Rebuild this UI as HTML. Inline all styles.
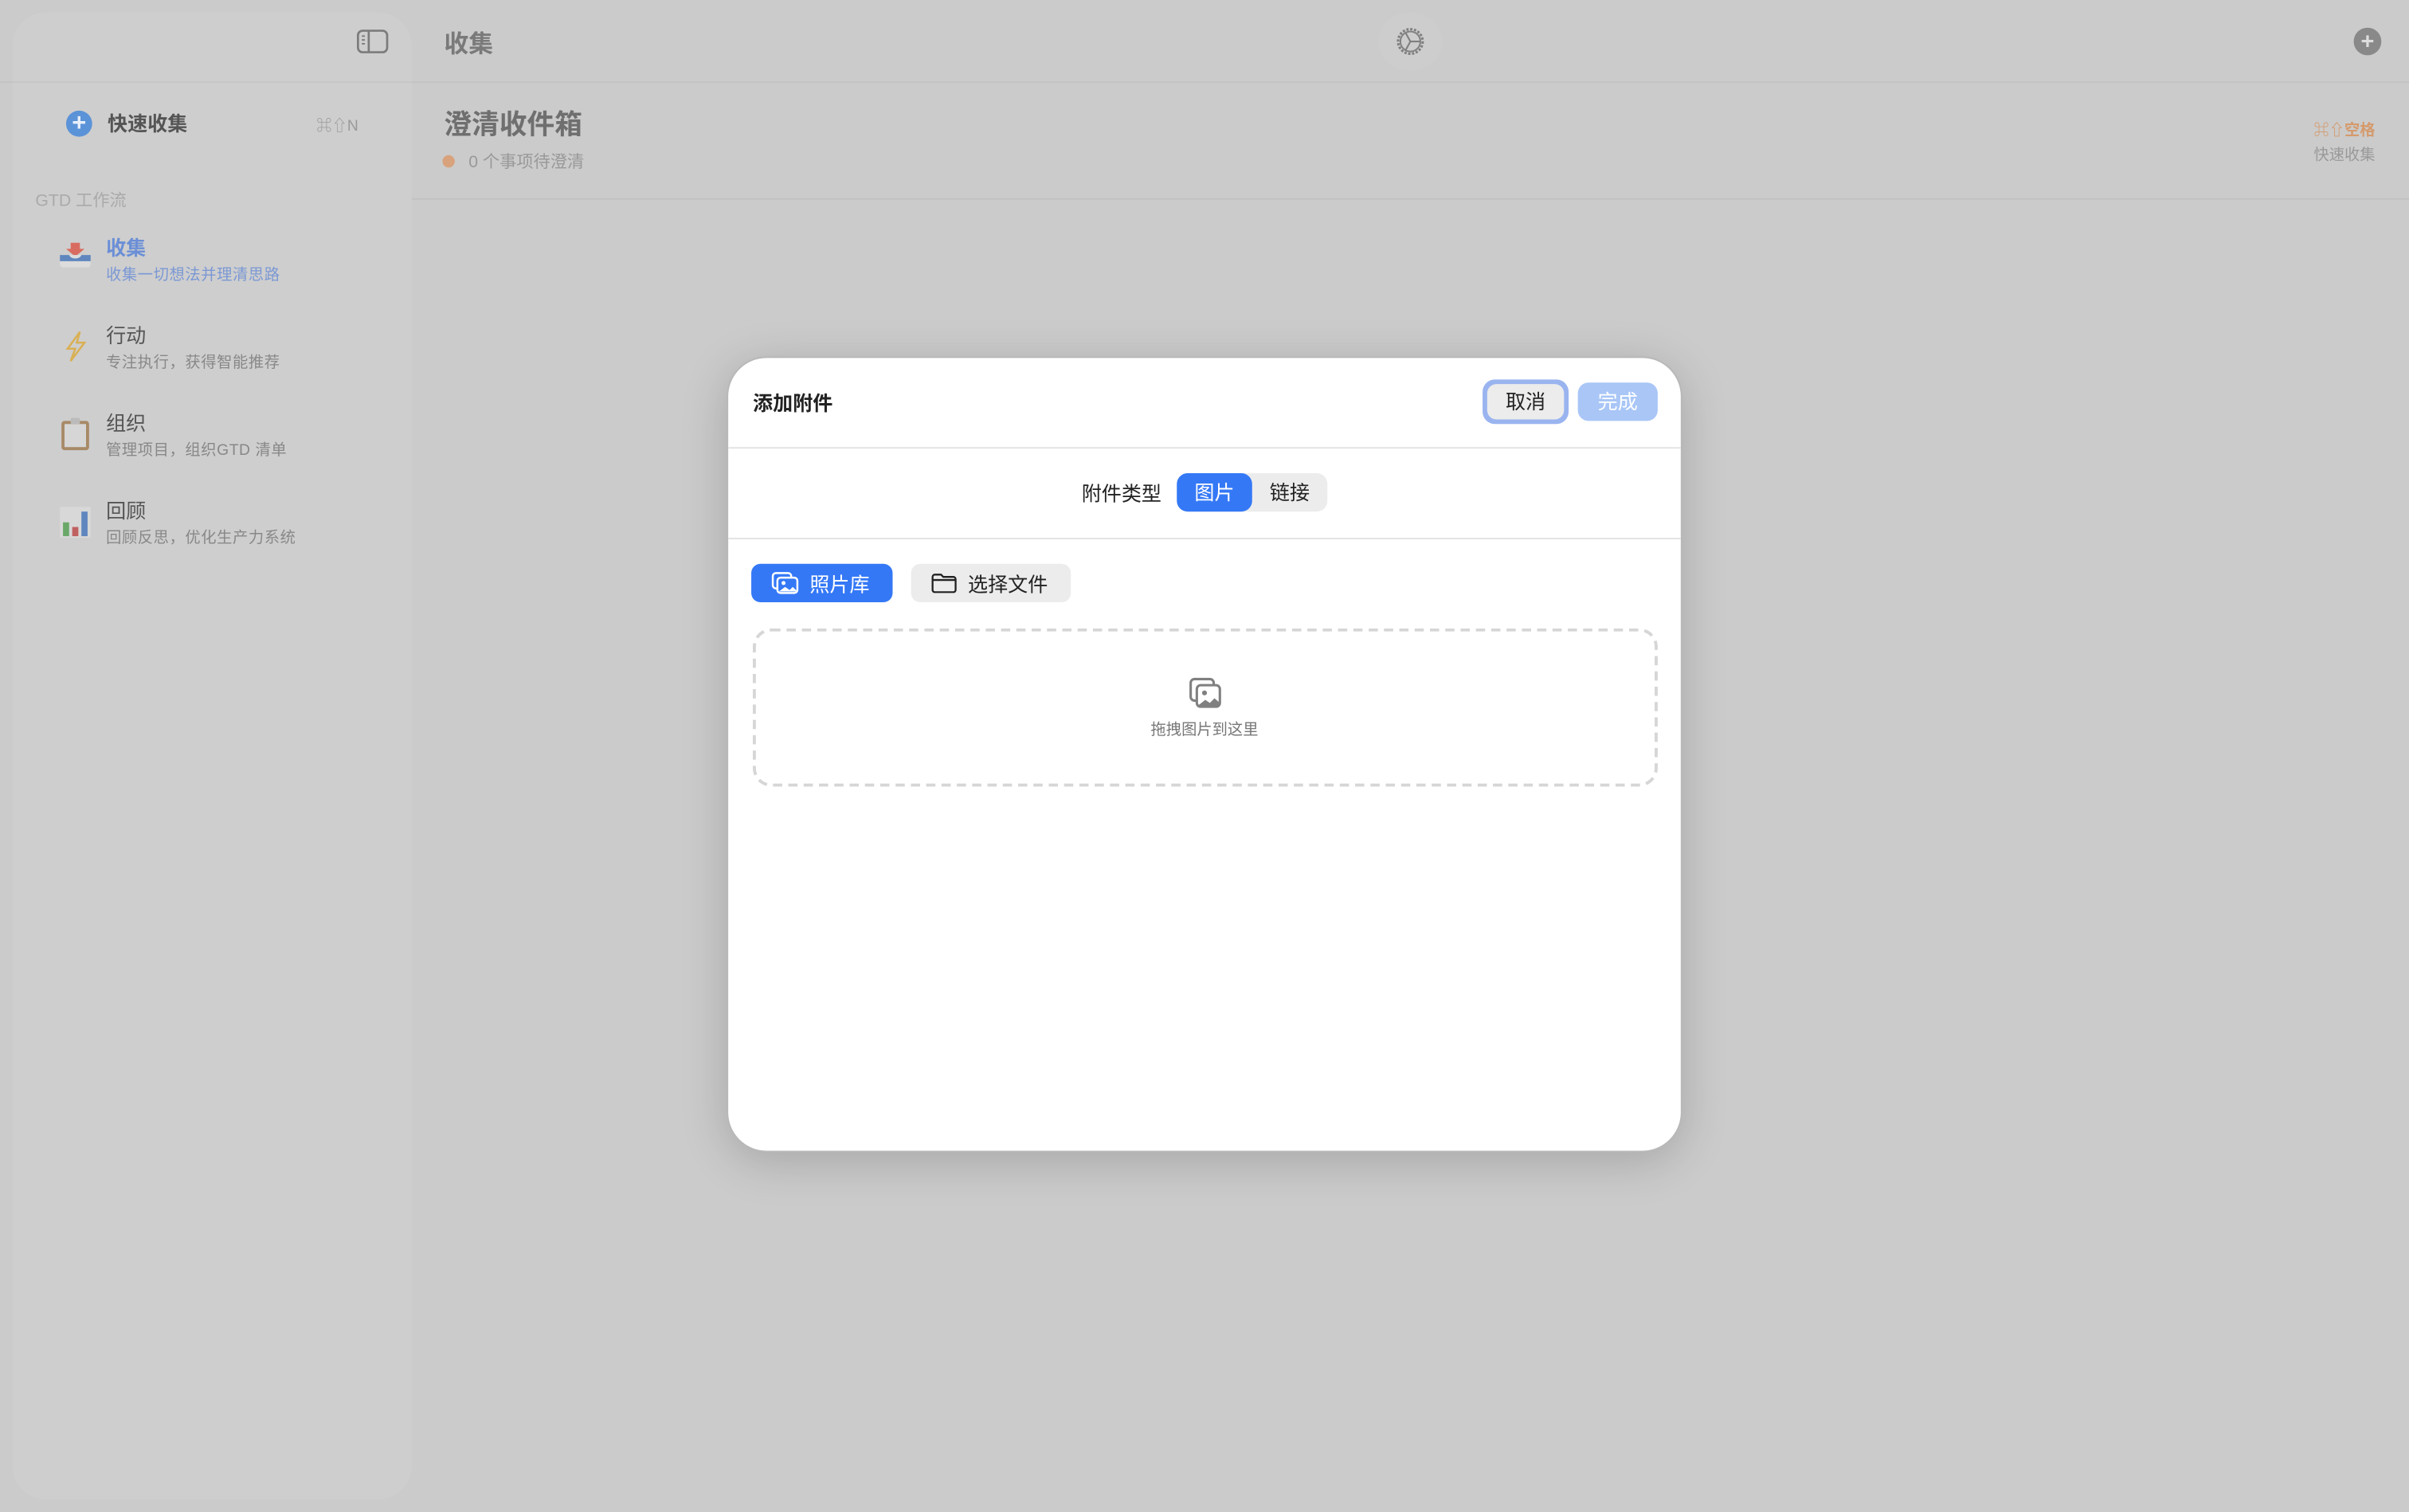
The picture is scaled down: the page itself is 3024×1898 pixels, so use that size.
<!DOCTYPE html>
<html><head><meta charset="utf-8"><style>
*{margin:0;padding:0;box-sizing:border-box}
html,body{width:3024px;height:1898px;overflow:hidden;background:#cbcbcb}
#w{position:absolute;left:0;top:0;width:1568px;height:984px;transform:scale(1.928571);transform-origin:0 0;font-family:"Liberation Sans","Noto Sans CJK SC",sans-serif;background:#cbcbcb}
.a{position:absolute;white-space:nowrap}
</style></head><body><div id="w">
<div class="a" style="left:268px;top:53px;width:1300px;height:1px;background:#c2c2c2"></div>
<div class="a" style="left:0;top:53px;width:10px;height:1px;background:#c2c2c2"></div>
<div class="a" style="left:8px;top:8px;width:260px;height:968px;border-radius:22px;background:#cecece"></div>
<div class="a" style="left:8px;top:53px;width:260px;height:1px;background:#c6c6c6"></div>
<svg class="a" style="left:232px;top:19px" width="21" height="16" viewBox="0 0 21 16"><rect x="1" y="1" width="19" height="14" rx="3" fill="none" stroke="#7c7c7c" stroke-width="1.4"/><line x1="8" y1="1" x2="8" y2="15" stroke="#7c7c7c" stroke-width="1.4"/><path d="M3.5 4.5h2M3.5 7h2M3.5 9.5h2" stroke="#7c7c7c" stroke-width="1"/></svg>
<div class="a" style="left:43px;top:72px;width:17px;height:17px;border-radius:50%;background:#5b93d8;color:#e8effa;font-size:16px;line-height:18px;text-align:center;font-weight:bold">+</div>
<div class="a" style="left:70px;top:70px;font-size:13px;font-weight:bold;color:#555">快速收集</div>
<div class="a" style="left:206px;top:73px;font-size:10px;color:#999">⌘⇧N</div>
<div class="a" style="left:23px;top:122px;font-size:11px;color:#aaa">GTD 工作流</div>
<svg class="a" style="left:38px;top:155px" width="22" height="22" viewBox="0 0 22 22"><path d="M8 3h6v4h3l-6 5-6-5h3z" fill="#d96c60"/><rect x="1" y="11" width="20" height="8" rx="2" fill="#dcdcdc"/><path d="M1 11h6c1 3 7 3 8 0h6v4H1z" fill="#5f86be"/></svg>
<div class="a" style="left:69px;top:151px;font-size:13px;font-weight:bold;color:#6b8fd6">收集</div>
<div class="a" style="left:69px;top:170px;font-size:10px;color:#7b98d4;letter-spacing:0.3px">收集一切想法并理清思路</div>
<svg class="a" style="left:38px;top:214px" width="22" height="22" viewBox="0 0 22 22"><path d="M14 2L6 13h5l-3 8 9-12h-5z" fill="none" stroke="#d9b054" stroke-width="1.3"/></svg>
<div class="a" style="left:69px;top:208px;font-size:13px;color:#555">行动</div>
<div class="a" style="left:69px;top:227px;font-size:10px;color:#888;letter-spacing:0.3px">专注执行，获得智能推荐</div>
<svg class="a" style="left:38px;top:271px" width="22" height="24" viewBox="0 0 22 24"><rect x="2" y="3" width="18" height="19" rx="2" fill="#a88a68"/><rect x="4" y="5" width="14" height="15" fill="#d6d6d6"/><rect x="8" y="1" width="6" height="4" rx="1" fill="#bbb"/></svg>
<div class="a" style="left:69px;top:265px;font-size:13px;color:#555">组织</div>
<div class="a" style="left:69px;top:284px;font-size:10px;color:#888;letter-spacing:0.3px">管理项目，组织GTD 清单</div>
<svg class="a" style="left:38px;top:328px" width="22" height="24" viewBox="0 0 22 24"><rect x="1" y="2" width="20" height="20" fill="#d8d8d8"/><rect x="3" y="12" width="4" height="9" fill="#6aa86a"/><rect x="9" y="15" width="4" height="6" fill="#c06060"/><rect x="15" y="5" width="4" height="16" fill="#5f86be"/></svg>
<div class="a" style="left:69px;top:322px;font-size:13px;color:#555">回顾</div>
<div class="a" style="left:69px;top:341px;font-size:10px;color:#888;letter-spacing:0.3px">回顾反思，优化生产力系统</div>
<div class="a" style="left:289px;top:15px;font-size:16px;font-weight:bold;color:#7a7a7a">收集</div>
<div class="a" style="left:897px;top:8px;width:42px;height:38px;border-radius:50%;background:#cdcdcd"></div>
<svg class="a" style="left:908px;top:17px" width="20" height="20" viewBox="0 0 20 20"><circle cx="10" cy="10" r="8" fill="none" stroke="#7f7f7f" stroke-width="1.6" stroke-dasharray="1.5 1"/><circle cx="10" cy="10" r="6.5" fill="none" stroke="#7f7f7f" stroke-width="1"/><path d="M10 10l6 0M10 10L7 4.5M10 10l-3 5.5" stroke="#7f7f7f" stroke-width="1.1"/></svg>
<div class="a" style="left:1532px;top:18px;width:18px;height:18px;border-radius:50%;background:#898989;color:#ddd;font-size:15px;line-height:19px;text-align:center;font-weight:bold">+</div>
<div class="a" style="left:289px;top:67px;font-size:18px;font-weight:bold;color:#6f6f6f">澄清收件箱</div>
<div class="a" style="left:288px;top:101px;width:8px;height:8px;border-radius:50%;background:#d8a27c"></div>
<div class="a" style="left:305px;top:97px;font-size:11px;color:#999">0 个事项待澄清</div>
<div class="a" style="left:268px;top:129px;width:1300px;height:1px;background:#c2c2c2"></div>
<div class="a" style="left:1506px;top:76px;font-size:10px;color:#d59a6c;font-weight:bold">⌘⇧空格</div>
<div class="a" style="left:1506px;top:92px;font-size:10px;color:#999">快速收集</div>
<div class="a" style="left:473px;top:232px;width:622px;height:518px;border-radius:26px;background:#fff;box-shadow:0 6px 30px rgba(0,0,0,.18);border:1px solid #b8b8b8">
<div class="a" style="left:16px;top:19px;font-size:13px;font-weight:bold;color:#222">添加附件</div>
<div class="a" style="left:491px;top:14px;width:56px;height:29px;border-radius:8px;background:#9ab4f0"></div>
<div class="a" style="left:494px;top:17px;width:50px;height:23px;border-radius:6px;background:#ececec;font-size:13px;line-height:23px;text-align:center;color:#222">取消</div>
<div class="a" style="left:553px;top:16px;width:52px;height:25px;border-radius:7px;background:#a9c6f7;font-size:13px;line-height:25px;text-align:center;color:#fff">完成</div>
<div class="a" style="left:0;top:58px;width:620px;height:1px;background:#e3e3e3"></div>
<div class="a" style="left:230px;top:78px;font-size:13px;color:#222">附件类型</div>
<div class="a" style="left:292px;top:75px;width:98px;height:25px;border-radius:7px;background:#ececec"></div>
<div class="a" style="left:292px;top:75px;width:49px;height:25px;border-radius:7px;background:#3478f6;color:#fff;font-size:13px;line-height:25px;text-align:center">图片</div>
<div class="a" style="left:341px;top:75px;width:49px;height:25px;color:#222;font-size:13px;line-height:25px;text-align:center">链接</div>
<div class="a" style="left:0;top:117px;width:620px;height:1px;background:#e3e3e3"></div>
<div class="a" style="left:15px;top:134px;width:92px;height:25px;border-radius:6px;background:#3478f6"></div>
<svg class="a" style="left:28px;top:139px" width="18" height="15" viewBox="0 0 18 15"><rect x="1" y="1" width="12" height="10" rx="2" fill="none" stroke="#fff" stroke-width="1.3"/><rect x="4" y="4" width="13" height="10" rx="2" fill="#3478f6" stroke="#fff" stroke-width="1.3"/><circle cx="8" cy="7.5" r="1.3" fill="#fff"/><path d="M5 13l4-3 3 2 2-2 3 3z" fill="#fff"/></svg>
<div class="a" style="left:53px;top:137px;font-size:13px;color:#fff">照片库</div>
<div class="a" style="left:119px;top:134px;width:104px;height:25px;border-radius:6px;background:#ececec"></div>
<svg class="a" style="left:132px;top:140px" width="17" height="13" viewBox="0 0 17 13"><path d="M1 2.5a1.5 1.5 0 0 1 1.5-1.5h4l1.5 1.5h6.5a1.5 1.5 0 0 1 1.5 1.5v7a1.5 1.5 0 0 1-1.5 1.5h-12A1.5 1.5 0 0 1 1 11z M1 4.5h15" fill="none" stroke="#222" stroke-width="1.2"/></svg>
<div class="a" style="left:156px;top:137px;font-size:13px;color:#222">选择文件</div>
<div class="a" style="left:16px;top:176px;width:589px;height:103px;border-radius:12px;border:2px dashed #d6d6d6"></div>
<svg class="a" style="left:299px;top:207px" width="24" height="22" viewBox="0 0 24 22"><rect x="2" y="2" width="15" height="14" rx="2.5" fill="#fff" stroke="#808080" stroke-width="1.6"/><rect x="6" y="6" width="15" height="14" rx="2.5" fill="#fff" stroke="#808080" stroke-width="1.6"/><circle cx="11" cy="11" r="1.6" fill="#808080"/><path d="M6.5 19.5l5-4 3 2 3-3 3.5 3v2z" fill="#808080"/></svg>
<div class="a" style="left:0;top:233px;width:620px;text-align:center;font-size:10px;color:#777">拖拽图片到这里</div>
</div>
</div></body></html>
